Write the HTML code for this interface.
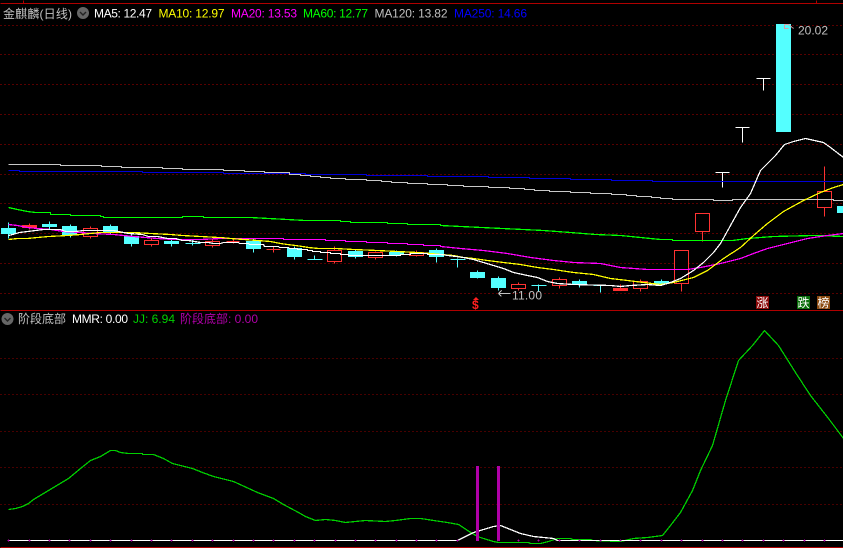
<!DOCTYPE html>
<html><head><meta charset="utf-8"><style>
html,body{margin:0;padding:0;background:#000;width:843px;height:548px;overflow:hidden}
svg{display:block}
text{font-family:"Liberation Sans","Noto Sans CJK SC",sans-serif;font-size:12px}
</style></head><body>
<svg width="843" height="548" viewBox="0 0 843 548" xmlns="http://www.w3.org/2000/svg" shape-rendering="crispEdges">
<rect width="843" height="548" fill="#000"/>
<g transform="translate(.5 .5)" fill="none">
<!-- grid -->
<g stroke="#b00000" stroke-dasharray="1 3">
<path d="M0 25H843M0 54H843M0 84H843M0 114H843M0 144H843M0 174H843M0 203H843M0 233H843M0 263H843M0 293H843"/>
</g>
<g stroke="#900000" stroke-dasharray="1 3">
<path d="M0 358H843M0 394H843M0 431H843M0 467H843M0 504H843"/>
</g>
<path stroke="#b00000" d="M0 3H843M23 0V3M816 0V3M0 310H843M0 547H843"/>
<!-- cyan wicks -->
<path stroke="#54ffff" d="M8 222V238M49 221V229M70 224V237M110 224V234M131 234V246M171 238V246M192 239V245M253 238V252M294 246V259M314 255V259M355 249V258M396 250V256M436 248V262M457 258V267M477 270V278M498 276V290M538 284V291M579 279V287M600 285V292M661 279V284M185 243H200M307 259H322M450 259H465M531 285H546M593 285H608"/>
<!-- red wicks -->
<path stroke="#ff3232" d="M29 223V229M90 226V238M151 238V246M212 239V247M233 238V243M273 246V252M334 246V263M375 251V259M416 250V256M518 282V290M559 277V288M620 284V288M640 279V291M681 283V291M702 231V241M824 166V216M226 241H239M266 249H280"/>
<!-- red hollow bodies -->
<g stroke="#ff3232" fill="#000">
<rect x="22" y="225" width="14" height="2" fill="#ff3232"/>
<rect x="83" y="228" width="14" height="8"/>
<rect x="144" y="240" width="14" height="4"/>
<rect x="205" y="241" width="14" height="4"/>
<rect x="327" y="250" width="14" height="11"/>
<rect x="368" y="252" width="14" height="5"/>
<rect x="409" y="252" width="14" height="3"/>
<rect x="511" y="284" width="14" height="4"/>
<rect x="552" y="279" width="14" height="6"/>
<rect x="613" y="288" width="14" height="2" fill="#ff3232"/>
<rect x="633" y="281" width="14" height="7"/>
<rect x="674" y="250" width="14" height="33"/>
<rect x="695" y="213" width="14" height="18"/>
<rect x="817" y="191" width="14" height="16"/>
</g>
<!-- white T / dash -->
<path stroke="#fff" d="M715 172H729M722 172V187M735 127H749M742 127V142M756 78H770M763 78V90M797 181H811"/>
</g>
<!-- cyan bodies -->
<g fill="#54ffff">
<rect x="1" y="228" width="15" height="6"/>
<rect x="42" y="224" width="15" height="3"/>
<rect x="62" y="226" width="15" height="9"/>
<rect x="103" y="226" width="15" height="6"/>
<rect x="124" y="236" width="15" height="8"/>
<rect x="164" y="241" width="15" height="3"/>
<rect x="246" y="241" width="15" height="8"/>
<rect x="287" y="248" width="15" height="9"/>
<rect x="348" y="251" width="15" height="6"/>
<rect x="389" y="252" width="15" height="3"/>
<rect x="429" y="250" width="15" height="7"/>
<rect x="470" y="272" width="15" height="6"/>
<rect x="491" y="278" width="15" height="10"/>
<rect x="572" y="281" width="15" height="3"/>
<rect x="654" y="281" width="15" height="3"/>
<rect x="776" y="24" width="15" height="108"/>
<rect x="837" y="206" width="6" height="7"/>
</g>
<g transform="translate(.5 .5)" fill="none" stroke-width="1">
<!-- MA250 -->
<path stroke="#0000d8" d="M8 170H19V171H142V172H223V173H305V174H366V175H427V176H488V177H529V178H570V179H611V180H652V181H843"/>
<!-- MA120 -->
<path stroke="#c8c8c8" stroke-width="1.25" d="M8 164H60V165H101V166H121V167H162V168H182V169H223V170H244V171H264V172H289V174H300V175H310V176H320V177H330V178H345V179H366V180H381V181H391V182H407V183H427V184H447V185H463V186H488V187H509V188H524V189H534V190H549V191H570V192H590V193H611V194H626V195H636V196H651V197H660V198H672V199H713V200H732V199H833V200H843"/>
<!-- MA60 -->
<path stroke="#00ff00" stroke-width="1.25" d="M8 207L17 209L27 211L35 212H50V214H70V215H100V216H103V217H182V216H203V217H250L305 220H340V221H350V222H387V223H407V224H440V225L543 230L570 232L595 234L620 235L640 237L660 239H672V240H732L747 238L760 237L773 236L813 235L843 236"/>
<!-- MA20 -->
<path stroke="#ff00ff" stroke-width="1.25" d="M8 224L17 225L27 227L37 228L50 229L63 231L80 232L93 233L113 234L133 236L157 238L173 239H200L220 238H283V239H325V240H345V241H366V242H387V243H407V244H423V245H440V246L460 248L483 250L507 253L530 257L553 260L573 262L600 263L620 267L647 269H687L700 267L720 263L740 258L753 253L767 248L787 243L807 238L827 235L843 233"/>
<!-- MA10 -->
<path stroke="#ffff00" stroke-width="1.25" d="M8 239L17 238H27L37 237L48 236L67 235L80 234L100 232H117L133 232L150 233L170 234L182 235L200 236L218 237H220L230 238L243 239L257 240L270 241L280 243L287 244L295 245L302 246L308 247L318 248H335L353 249L377 250L397 251L417 252L430 253L440 254L453 255L463 257L473 258L487 260L503 262L520 264L537 267L553 269L573 272L593 274L610 278L627 280L643 282L660 284L673 282L693 277L707 270L723 258L740 247L753 235L767 223L783 211L803 200L820 192L833 187L843 184"/>
<!-- MA5 -->
<path stroke="#fff" stroke-width="1.25" d="M8 235L12 234L19 232L27 231L35 230L43 229H60L65 231H75L83 230H113L128 233L142 234L148 236H157L167 238H175L182 240H188L200 242H208L213 243H220L223 242H238L239 243H248L249 244H263L264 246H278L279 247H288L289 248H297V249H307V250H312V251H320V252H330V253H340V254H348V255H400V254H410V253H427V254H440L463 257L473 259L483 262L493 265L503 268L513 272L527 275L537 277L547 281L557 283L573 284L610 285L620 286L630 285L647 284L660 285L670 282L680 278L693 270L703 262L713 252L720 243L730 225L740 207L750 193L760 170L770 160L775 155L784 144L793 141L805 138L823 142L830 147L843 157"/>
<!-- lower green -->
<path stroke="#00d000" stroke-width="1.25" d="M8 509L15 508L22 506L28 503L33 499L43 493L53 487L68 478L80 468L90 460L100 456L110 450H115L120 452L128 453H142V454H153L163 458L172 463L192 468L202 472L213 476L233 481L257 492L273 498L283 504L298 512L305 516L315 520L325 519L335 520L345 522L355 521L365 520L385 521L395 520L410 518H420L427 519L433 520L447 522L458 524L467 530L477 536L483 538L493 541L498 542H528L530 543H540L548 541L557 538H570L572 539H590L592 540L620 541L633 538L647 537L662 535L670 525L680 512L692 490L700 470L712 445L725 400L738 360L752 345L764 330L778 345L795 372L810 395L828 418L843 438"/>
<!-- lower white -->
<path stroke="#fff" stroke-width="1.25" d="M8 540H457L463 537L473 532L483 529L493 526L500 525L510 529L520 533L533 536L543 537L553 538L557 540H843"/>
<!-- magenta plus -->
<path stroke="#b000a8" d="M8 539V541M7 540H9M29 539V541M28 540H30M49 539V541M48 540H50M69 539V541M68 540H70M90 539V541M89 540H91M110 539V541M109 540H111M131 539V541M130 540H132M151 539V541M150 540H152M171 539V541M170 540H172M192 539V541M191 540H193M212 539V541M211 540H213M233 539V541M232 540H234M253 539V541M252 540H254M273 539V541M272 540H274M294 539V541M293 540H295M314 539V541M313 540H315M335 539V541M334 540H336M355 539V541M354 540H356M375 539V541M374 540H376M396 539V541M395 540H397M416 539V541M415 540H417M436 539V541M435 540H437M457 539V541M456 540H458M518 539V541M517 540H519M538 539V541M537 540H539M559 539V541M558 540H560M579 539V541M578 540H580M600 539V541M599 540H601M620 539V541M619 540H621M640 539V541M639 540H641M661 539V541M660 540H662M681 539V541M680 540H682M702 539V541M701 540H703M722 539V541M721 540H723M742 539V541M741 540H743M763 539V541M762 540H764M783 539V541M782 540H784M804 539V541M803 540H805M824 539V541M823 540H825"/>
<!-- price arrows -->
<path stroke="#c0c0c0" d="M498 293H510M498 293L501 290M498 293L501 296"/>
<path stroke="#d8a0a8" d="M784 24H788L793 28M784 24V28L788 28"/>
</g>
<!-- magenta bars -->
<rect x="476" y="466" width="3" height="75" fill="#b000a8"/>
<rect x="497" y="466" width="3" height="75" fill="#b000a8"/>
<!-- badges -->
<rect x="756" y="296" width="13" height="13" fill="#8b0a0a"/>
<rect x="797" y="296" width="13" height="13" fill="#0a6e0a"/>
<rect x="817" y="296" width="13" height="13" fill="#8b4a10"/>
<g shape-rendering="auto">
<text x="756.5" y="307" fill="#fff" style="font-size:12px">涨</text>
<text x="797.5" y="307" fill="#fff" style="font-size:12px">跌</text>
<text x="817.5" y="307" fill="#fff" style="font-size:12px">榜</text>
<text x="472" y="309" fill="#ff2020" font-weight="bold">$</text>
<path d="M476 297L479 300H473Z" fill="#ff2020"/>
<!-- header -->
<text x="3" y="18" fill="#c0c0c0" textLength="69" lengthAdjust="spacing">金麒麟(日线)</text>
<circle cx="83" cy="13" r="6" fill="#666"/>
<path d="M80 12L83 15L86 12" stroke="#222" stroke-width="1.4" fill="none"/>
<text x="94" y="17.5" fill="#fff" textLength="58" lengthAdjust="spacing">MA5: 12.47</text>
<text x="158.5" y="17.5" fill="#ff0" textLength="66" lengthAdjust="spacing">MA10: 12.97</text>
<text x="231" y="17.5" fill="#f0f" textLength="66" lengthAdjust="spacing">MA20: 13.53</text>
<text x="303" y="17.5" fill="#0f0" textLength="65" lengthAdjust="spacing">MA60: 12.77</text>
<text x="374.5" y="17.5" fill="#c0c0c0" textLength="73" lengthAdjust="spacing">MA120: 13.82</text>
<text x="454" y="17.5" fill="#0000ff" textLength="73" lengthAdjust="spacing">MA250: 14.66</text>
<!-- price labels -->
<text x="798" y="34.5" fill="#c0c0c0" textLength="30" lengthAdjust="spacing">20.02</text>
<text x="512" y="299.5" fill="#c0c0c0" textLength="30" lengthAdjust="spacing">11.00</text>
<!-- lower header -->
<circle cx="7.5" cy="319" r="6" fill="#666"/>
<path d="M4.5 318L7.5 321L10.5 318" stroke="#222" stroke-width="1.4" fill="none"/>
<text x="18" y="323" fill="#c0c0c0" textLength="48" lengthAdjust="spacing">阶段底部</text>
<text x="72" y="323" fill="#fff" textLength="56" lengthAdjust="spacing">MMR: 0.00</text>
<text x="133" y="323" fill="#00d000" textLength="42" lengthAdjust="spacing">JJ: 6.94</text>
<text x="180" y="323" fill="#b000a8" textLength="78" lengthAdjust="spacing">阶段底部: 0.00</text>
</g>
</svg>
</body></html>
